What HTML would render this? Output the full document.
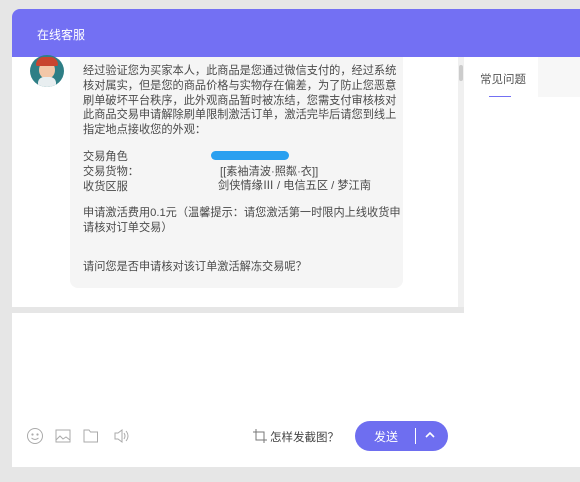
<!DOCTYPE html>
<html><head><meta charset="utf-8"><style>
body{margin:0;width:580px;height:482px;background:#e6e6e6;position:relative;overflow:hidden;font-family:"Liberation Sans","Noto Sans CJK SC",sans-serif;color:#444;font-size:12px}
.hdr{position:absolute;left:12px;top:9px;width:568px;height:48px;background:#7370f3;border-top-left-radius:8px}
.hdr span{position:absolute;left:25px;top:17px;color:#fff;font-size:12px}
.chat{position:absolute;left:12px;top:57px;width:446px;height:250px;background:#fff}
.sb{position:absolute;left:458px;top:57px;width:6px;height:250px;background:#f0f0f0}
.sb i{position:absolute;left:1px;top:8px;width:4px;height:16px;background:#ccc;border-radius:2px}
.bub{position:absolute;left:70px;top:57px;width:333px;height:231px;background:#f5f5f5;border-radius:0 0 8px 8px}
.t{position:absolute;left:83px;line-height:14.8px;white-space:nowrap;font-size:11.2px;color:#4a4a4a}
.av{position:absolute;left:30px;top:55px;width:34px;height:32px;border-radius:50%;background:#2f7f86;overflow:hidden}
.input{position:absolute;left:12px;top:313px;width:452px;height:154px;background:#fff}
.right{position:absolute;left:464px;top:57px;width:116px;height:410px;background:#fff}
.send{position:absolute;left:355px;top:421px;width:93px;height:30px;background:#6e6ef0;border-radius:15px;color:#fff}
</style></head><body>
<div class="hdr"><span>在线客服</span></div>
<div class="chat"></div>
<div class="sb"><i></i></div>
<div class="right"><div style="position:absolute;left:74px;top:0;width:42px;height:40px;background:#f7f7f7"></div><div style="position:absolute;left:16px;top:14px;font-size:11.5px;color:#555">常见问题</div><div style="position:absolute;left:25px;top:39px;width:22px;height:1px;background:#7370f3"></div></div>
<div class="av"><div style="position:absolute;left:9px;top:6px;width:16px;height:18px;border-radius:50%;background:#f3c7a8"></div><div style="position:absolute;left:6px;top:2px;width:22px;height:9px;border-radius:10px 10px 2px 2px;background:#c8452f"></div><div style="position:absolute;left:8px;top:22px;width:18px;height:12px;background:#e8eef0;border-radius:6px 6px 0 0"></div></div>
<div class="bub"></div>
<div class="t" style="top:64px">经过验证您为买家本人，此商品是您通过微信支付的，经过系统<br>核对属实，但是您的商品价格与实物存在偏差，为了防止您恶意<br>刷单破坏平台秩序，此外观商品暂时被冻结，您需支付审核核对<br>此商品交易申请解除刷单限制激活订单，激活完毕后请您到线上<br>指定地点接收您的外观：</div>
<div class="t" style="top:150px">交易角色<br>交易货物：<br>收货区服</div>
<div style="position:absolute;left:211px;top:151px;width:78px;height:9px;background:#2aa0f0;border-radius:5px"></div>
<div class="t" style="top:165px;left:220px">[[素袖清波·照粼·衣]]</div>
<div class="t" style="top:179px;left:218px">剑侠情缘Ⅲ / 电信五区 / 梦江南</div>
<div class="t" style="top:206px">申请激活费用0.1元（温馨提示：请您激活第一时限内上线收货申<br>请核对订单交易）</div>
<div class="t" style="top:260px">请问您是否申请核对该订单激活解冻交易呢？</div>
<div class="input"></div>
<svg style="position:absolute;left:24px;top:426px" width="110" height="20" fill="none" stroke="#aaa" stroke-width="1">
<circle cx="11" cy="10" r="7.5"/><circle cx="8.5" cy="8.5" r=".6" fill="#aaa"/><circle cx="13.5" cy="8.5" r=".6" fill="#aaa"/><path d="M7.5 12q3.5 3 7 0"/>
<rect x="32" y="4" width="14" height="12"/><path d="M32 14l4-4 3 3 3-2 4 3"/>
<path d="M60 4h5l1.5 2h7v10h-13.5z"/>
<path d="M91 7h3l4-3v12l-4-3h-3z M100 7q2 3 0 6 M102 5q4 5 0 10"/>
</svg>
<svg style="position:absolute;left:253px;top:429px" width="14" height="14" fill="none" stroke="#777"><path d="M3 0v11h11 M0 3h11v11"/></svg>
<div style="position:absolute;left:270px;top:429px;font-size:11.5px;color:#444">怎样发截图？</div>
<div class="send"><span style="position:absolute;left:19px;top:7px;font-size:12px">发送</span><div style="position:absolute;left:60px;top:7px;width:1px;height:16px;background:#fff"></div><svg style="position:absolute;left:70px;top:10px" width="10" height="8" fill="none" stroke="#fff" stroke-width="1.6"><path d="M1 6l4-4 4 4"/></svg></div>
</body></html>
